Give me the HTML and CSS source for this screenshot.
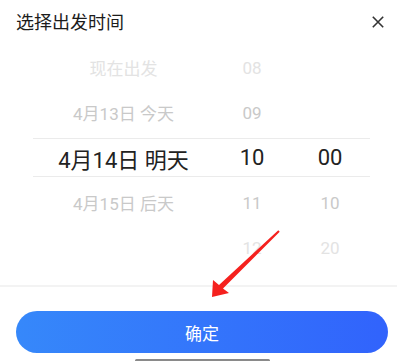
FILE: index.html
```html
<!DOCTYPE html>
<html lang="zh">
<head>
<meta charset="utf-8">
<link rel="stylesheet" href="styles.css">
</head>
<body>
<div class="sheet">
  <header class="head">
    <h1 class="title">选择出发时间</h1>
    <svg class="close" width="12" height="12" viewBox="0 0 12 12"><path d="M0.8 0.8 L11.2 11.2 M11.2 0.8 L0.8 11.2" stroke="#333" stroke-width="1.6" fill="none"/></svg>
  </header>
  <div class="picker">
    <div class="row far"><span>现在出发</span><span>08</span><span></span></div>
    <div class="row near"><span>4月13日 今天</span><span>09</span><span></span></div>
    <div class="row sel"><span>4月14日 明天</span><span>10</span><span>00</span></div>
    <div class="row near"><span>4月15日 后天</span><span>11</span><span>10</span></div>
    <div class="row far"><span></span><span>12</span><span>20</span></div>
  </div>
  <div class="sep"></div>
  <div class="foot">
    <button class="ok">确定</button>
  </div>
  <div class="home"></div>
  <svg class="arrow" width="80" height="80" viewBox="0 0 80 80"><polygon points="7,72 8,55 14,60 73.3,5.3 74.7,6.7 18,63.5 24,68" fill="#f5211e"/></svg>
</div>
</body>
</html>
```
FILE: styles.css
```css
* { box-sizing: border-box; }
html, body { margin: 0; padding: 0; background: #fff; }
body {
  font-family: Roboto, "Noto Sans CJK SC", sans-serif;
  width: 397px;
  height: 361px;
  overflow: hidden;
}
.sheet { position: relative; }
.head {
  height: 45px;
  display: flex;
  align-items: center;
  justify-content: space-between;
  padding: 0 13px 3px 16px;
}
.title {
  margin: 0;
  font-size: 18px;
  font-weight: 400;
  color: #1c1c1c;
  letter-spacing: 0;
}
.close { display: block; margin-top: 1px; }
.picker { display: flex; flex-direction: column; }
.row {
  display: grid;
  grid-template-columns: 181px 76px 80px;
  margin: 0 27px 0 33px;
  height: 45px;
  align-items: center;
  text-align: center;
  font-size: 17px;
}
.row span { display: block; }
.far { color: #e3e3e3; }
.near { color: #c9c9c9; }
.sel {
  height: 39px;
  margin-top: 3px;
  margin-bottom: 3px;
  border-top: 1px solid #ebebeb;
  border-bottom: 1px solid #ebebeb;
  font-size: 22px;
  color: #222;
}
.sep {
  margin-top: 15px;
  height: 2px;
  background: #f3f3f3;
}
.foot { padding: 24px 0 0 16px; }
.ok {
  display: block;
  width: 372px;
  height: 42px;
  border: 0;
  border-radius: 21px;
  background: linear-gradient(90deg, #3688fa, #3163fc);
  color: #fff;
  font-family: Roboto, "Noto Sans CJK SC", sans-serif;
  font-size: 17px;
  padding: 0;
}
.home {
  margin: 6px 0 0 135px;
  width: 135px;
  height: 3px;
  border-radius: 2px;
  background: #8a8a8a;
}
.arrow {
  position: absolute;
  left: 205px;
  top: 225px;
}
```
